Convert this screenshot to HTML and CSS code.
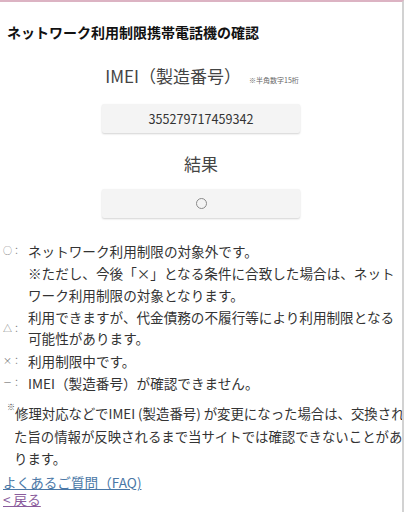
FILE: index.html
```html
<!DOCTYPE html>
<html lang="ja">
<head>
<meta charset="utf-8">
<link rel="stylesheet" href="styles.css">
</head>
<body>
<div class="page">
  <h1 class="title">ネットワーク利用制限携帯電話機の確認</h1>
  <div class="form">
    <div class="label label-imei">IMEI（製造番号）<small class="hint">※半角数字15桁</small></div>
    <div class="field field-imei">355279717459342</div>
    <div class="label label-result">結果</div>
    <div class="field field-result"><span class="circle"></span></div>
  </div>
  <ul class="legend">
    <li class="item item-top"><span class="mark">○：</span><span class="text">ネットワーク利用制限の対象外です。<br>※ただし、今後「×」となる条件に合致した場合は、ネット<br>ワーク利用制限の対象となります。</span></li>
    <li class="item item-mid"><span class="mark">△：</span><span class="text">利用できますが、代金債務の不履行等により利用制限となる<br>可能性があります。</span></li>
    <li class="item"><span class="mark">×：</span><span class="text">利用制限中です。</span></li>
    <li class="item"><span class="mark">－：</span><span class="text">IMEI（製造番号）が確認できません。</span></li>
  </ul>
  <p class="note"><span class="kome">※</span>修理対応などでIMEI (製造番号) が変更になった場合は、交換され<br>た旨の情報が反映されるまで当サイトでは確認できないことがあ<br>ります。</p>
  <div class="links">
    <a class="link link-faq" href="#">よくあるご質問（FAQ)</a>
    <a class="link link-back" href="#">&lt; 戻る</a>
  </div>
</div>
</body>
</html>
```
FILE: styles.css
```css
html, body {
  margin: 0;
  padding: 0;
  background: #fff;
}
body {
  font-family: "Noto Sans CJK JP", "Noto Sans", sans-serif;
  color: #333;
}
.page {
  box-sizing: border-box;
  width: 404px;
  min-height: 512px;
  border-top: 2px solid #dcb3c3;
  border-right: 2px solid #d2d2d2;
  overflow: hidden;
}
.title {
  margin: 20px 0 0 7px;
  font-size: 14px;
  line-height: 20px;
  font-weight: bold;
  color: #111;
  white-space: nowrap;
}
.form {
  display: flex;
  flex-direction: column;
  align-items: center;
}
.label {
  font-size: 17px;
  line-height: 24px;
  height: 24px;
  color: #444;
  white-space: nowrap;
}
.label-imei {
  margin-top: 22px;
  padding-left: 2px;
}
.hint {
  font-size: 7px;
  line-height: 0;
  color: #666;
  margin-left: 8px;
  vertical-align: baseline;
}
.label-result {
  margin-top: 19px;
}
.field {
  box-sizing: border-box;
  width: 198px;
  height: 29px;
  background: #f4f4f4;
  border-radius: 2px;
  box-shadow: 0 1px 2px rgba(0, 0, 0, 0.18);
  display: flex;
  align-items: center;
  justify-content: center;
  font-size: 12.6px;
  color: #333;
}
.field-imei {
  margin-top: 16px;
}
.field-result {
  margin-top: 13px;
}
.circle {
  width: 9px;
  height: 9px;
  border: 1px solid #8a8a8a;
  border-radius: 50%;
}
.legend {
  list-style: none;
  margin: 22px 0 0;
  padding: 0 0 0 3px;
}
.item {
  display: flex;
  align-items: flex-start;
  font-size: 13.6px;
  line-height: 22px;
  white-space: nowrap;
}
.item-mid {
  align-items: center;
  line-height: 21px;
  padding: 1px 0;
}
.mark {
  flex: 0 0 25px;
  font-size: 9px;
  color: #777;
}
.text {
  color: #333;
}
.note {
  margin: 8px 0 0;
  padding-left: 14px;
  font-size: 13.4px;
  line-height: 22.5px;
  color: #333;
  white-space: nowrap;
}
.kome {
  font-size: 8px;
  margin-left: -7px;
  vertical-align: top;
  line-height: 0;
  position: relative;
  top: 5px;
  color: #444;
}
.links {
  margin-top: 4px;
  padding-left: 3px;
  display: flex;
  flex-direction: column;
  align-items: flex-start;
}
.link {
  font-size: 13.6px;
  line-height: 17px;
  text-decoration: underline;
}
.link-faq {
  color: #4a77a6;
}
.link-back {
  color: #8a5b9c;
}
```
